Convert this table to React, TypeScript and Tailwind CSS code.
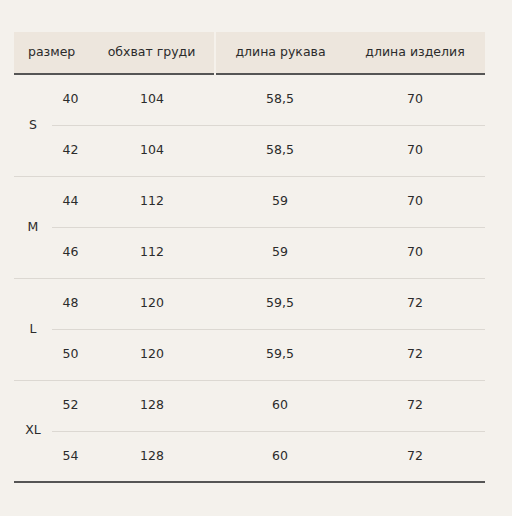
const groups = [
  { size: "S", rows: [["40", "104", "58,5", "70"], ["42", "104", "58,5", "70"]] },
  { size: "M", rows: [["44", "112", "59", "70"], ["46", "112", "59", "70"]] },
  { size: "L", rows: [["48", "120", "59,5", "72"], ["50", "120", "59,5", "72"]] },
  { size: "XL", rows: [["52", "128", "60", "72"], ["54", "128", "60", "72"]] },
];

export default function App() {
  return (
    <div className="min-h-[516px] w-[512px] bg-[#f4f1ec] pt-8 pl-[14px] font-['DejaVu_Sans',Verdana,sans-serif] text-[12.5px] text-[#2b2b2b]">
      <table className="w-[471px] table-fixed border-collapse">
        <colgroup>
          <col className="w-[38px]" />
          <col className="w-[37px]" />
          <col className="w-[126px]" />
          <col className="w-[130px]" />
          <col className="w-[140px]" />
        </colgroup>
        <thead>
          <tr className="h-[42px] bg-[#ede6dd] border-b-2 border-[#555]">
            <th colSpan={2} className="pl-[14px] text-left font-normal">размер</th>
            <th className="text-center font-normal">обхват груди</th>
            <th className="border-l-2 border-[#f5f1eb] text-center font-normal">длина рукава</th>
            <th className="text-center font-normal">длина изделия</th>
          </tr>
        </thead>
        <tbody>
          {groups.map((g, gi) =>
            g.rows.map((r, ri) => {
              const last = gi === groups.length - 1 && ri === 1;
              return (
                <tr
                  key={g.size + ri}
                  className={
                    "h-[51px] " +
                    (last ? "border-b-2 border-[#555]" : "border-b border-[#dcd8d2]")
                  }
                >
                  {ri === 0 && (
                    <td rowSpan={2} className="text-center">
                      {g.size}
                    </td>
                  )}
                  {r.map((v, i) => (
                    <td key={i} className="text-center">
                      {v}
                    </td>
                  ))}
                </tr>
              );
            })
          )}
        </tbody>
      </table>
    </div>
  );
}
